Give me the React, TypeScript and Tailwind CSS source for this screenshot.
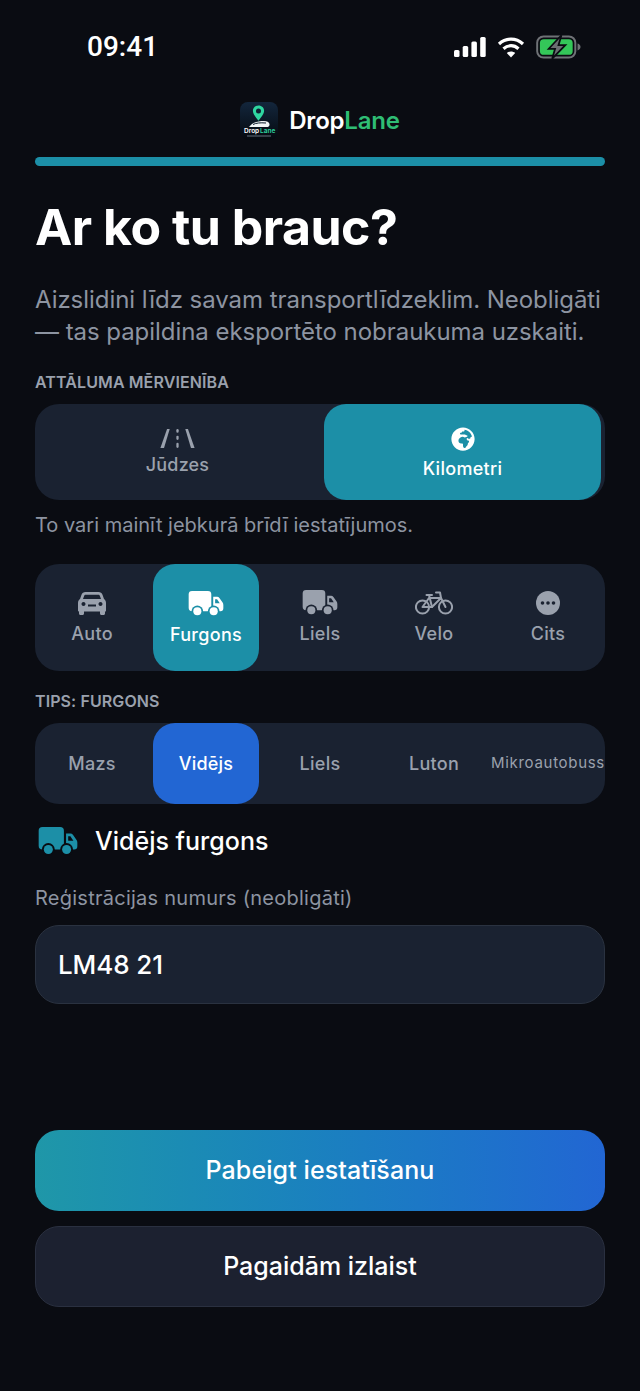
import { FaGlobeAfrica } from "react-icons/fa";

const font = { fontFamily: "Inter, 'Noto Sans', sans-serif" };

function Truck({ className, ring }: { className: string; ring: string }) {
  return (
    <svg viewBox="0 0 36 27" className={className} fill="currentColor">
      <path d="M3.500 0H20a3.500 3.500 0 0 1 3.500 3.500V21H3.500A3.500 3.500 0 0 1 0 17.500v-14A3.500 3.500 0 0 1 3.500 0Z" />
      <path d="M25 6h4.500c1 0 1.800.4 2.400 1.200l3.200 4.600c.6.8.9 1.700.9 2.700V18a3 3 0 0 1-3 3h-7.500V6Z" />
      <path d="M27.500 8.500h2l2.800 4.300h-4.800Z" fill={ring} />
      <circle cx="9" cy="21" r="6" fill={ring} />
      <circle cx="9" cy="21" r="4.200" />
      <circle cx="26" cy="21" r="6" fill={ring} />
      <circle cx="26" cy="21" r="4.200" />
    </svg>
  );
}

function Car({ className }: { className: string }) {
  return (
    <svg viewBox="0 0 28 23" className={className} fill="currentColor">
      <path
        fillRule="evenodd"
        d="M7.500 0h13c2 0 3.300 1 4 2.800l1.500 4.200c1.300 1 2 2.300 2 4v7.500c0 .8-.5 1.200-1.200 1.200H27V21.500c0 .8-.6 1.500-1.500 1.500h-2c-.9 0-1.500-.7-1.500-1.500V19.500H6v2c0 .8-.6 1.500-1.500 1.500h-2C1.600 23 1 22.300 1 21.500V19.700H1.200C.5 19.700 0 19.300 0 18.500V11c0-1.700.7-3 2-4l1.500-4.200C4.200 1 5.500 0 7.500 0Zm.3 2.700c-.9 0-1.400.4-1.700 1.200L5 7h18l-1.100-3.100c-.3-.8-.8-1.200-1.700-1.200H7.800ZM3.500 12c0 1.200.9 2 2 2s2-.8 2-2-.9-2-2-2-2 .8-2 2Zm17 0c0 1.200.9 2 2 2s2-.8 2-2-.9-2-2-2-2 .8-2 2ZM10 12.500v2h8v-2h-8Z"
      />
    </svg>
  );
}

function Bike({ className }: { className: string }) {
  return (
    <svg viewBox="0 0 38 24" className={className} fill="none" stroke="currentColor" strokeWidth="2" strokeLinecap="round" strokeLinejoin="round">
      <circle cx="7.500" cy="16" r="6.600" />
      <circle cx="30.500" cy="16" r="6.600" />
      <path d="M7.500 16 14 7h12M7.500 16H17L26 7l4.500 9" />
      <path d="M11.500 4h5.500M14 4l3 12" />
      <path d="M21 1.500h4L26 7" />
    </svg>
  );
}

function Road({ className }: { className: string }) {
  return (
    <svg viewBox="0 0 36 20" className={className} fill="currentColor">
      <path d="M7 0h2.800L3.800 20H0Z" />
      <path d="M29 0h-2.800L32.200 20H36Z" />
      <rect x="16.800" y="0" width="2.400" height="4" rx="1.200" />
      <rect x="16.800" y="7" width="2.400" height="4.500" rx="1.200" />
      <rect x="16.800" y="14.500" width="2.400" height="5.500" rx="1.200" />
    </svg>
  );
}

function More({ className }: { className: string }) {
  return (
    <svg viewBox="0 0 24 24" className={className}>
      <circle cx="12" cy="12" r="12" fill="currentColor" />
      <circle cx="6.500" cy="12" r="1.800" fill="#1a2231" />
      <circle cx="12" cy="12" r="1.800" fill="#1a2231" />
      <circle cx="17.500" cy="12" r="1.800" fill="#1a2231" />
    </svg>
  );
}

function Logo() {
  return (
    <svg viewBox="0 0 38 38" className="h-[38px] w-[38px]">
      <defs>
        <linearGradient id="logoBg" x1="0" y1="0" x2="0" y2="1">
          <stop offset="0" stopColor="#13263c" />
          <stop offset="1" stopColor="#05090f" />
        </linearGradient>
      </defs>
      <rect width="38" height="38" rx="8" fill="url(#logoBg)" />
      <path
        fillRule="evenodd"
        d="M18.500 3.500c3.300 0 5.600 2.400 5.600 5.300 0 3.400-3.200 6.800-5.600 10-2.400-3.200-5.600-6.600-5.600-10 0-2.900 2.300-5.300 5.600-5.300Zm0 2.900a2.500 2.500 0 1 0 0 5 2.500 2.500 0 0 0 0-5Z"
        fill="#2fd6a0"
      />
      <path d="M9 25c4-5 9-6 15-6 3 0 5 1 5.500 3 .2 2-1 3-3 3H9Z" fill="#f2f5f7" />
      <path d="M13 22.500c3-1.500 7-2 13-1.500" stroke="#0b1a2a" strokeWidth="1" fill="none" />
      <text x="4" y="31" fontSize="6.500" fontWeight="600" fill="#ffffff" fontFamily="Inter, sans-serif">
        Drop
      </text>
      <text x="20" y="31" fontSize="6.500" fontWeight="600" fill="#2fd6a0" fontFamily="Inter, sans-serif">
        Lane
      </text>
      <rect x="7" y="33.500" width="24" height="1" fill="#65707d" />
    </svg>
  );
}

function StatusBar() {
  return (
    <div className="flex h-[94px] items-center justify-between pl-[87px] pr-[59px]">
      <span className="text-[28px] font-medium leading-none text-white" style={{ fontFamily: "Roboto, sans-serif" }}>
        09:41
      </span>
      <div className="flex items-center gap-[11px]">
        <svg viewBox="0 0 32 20" className="h-[20px] w-[32px]" fill="#ffffff">
          <rect x="0" y="13" width="5.500" height="7" rx="1.500" />
          <rect x="8.700" y="9" width="5.500" height="11" rx="1.500" />
          <rect x="17.400" y="4.500" width="5.500" height="15.500" rx="1.500" />
          <rect x="26.200" y="0" width="5.500" height="20" rx="1.500" />
        </svg>
        <svg viewBox="0 0 28 22" className="h-[22px] w-[28px]" fill="none" stroke="#ffffff" strokeWidth="3.200">
          <path d="M2 8c7-6.500 17-6.500 24 0" />
          <path d="M6.500 12.700c4.500-4 10.500-4 15 0" />
          <path d="M14 21.500 9.800 17c2.500-2 5.900-2 8.400 0Z" fill="#ffffff" stroke="none" />
        </svg>
        <svg viewBox="0 0 46 24" className="h-[24px] w-[45px]">
          <rect x="1.200" y="1.200" width="39" height="21.600" rx="6.500" fill="none" stroke="#6f7276" strokeWidth="2" />
          <rect x="4" y="4" width="33.500" height="16" rx="4" fill="#34c759" />
          <path d="M42.500 8.500c2 .6 3 2 3 3.500s-1 2.900-3 3.500Z" fill="#6f7276" />
          <path d="M26 0 13 13.800h6.500L16.500 24 30 10.200h-7Z" fill="#6b6e72" stroke="#0a0c12" strokeWidth="1.800" />
        </svg>
      </div>
    </div>
  );
}

const vehicles = [
  { label: "Auto", icon: <Car className="h-[23px] w-[28px]" /> },
  { label: "Furgons", active: true, icon: <Truck className="h-[26px] w-[36px]" ring="#1c8fa7" /> },
  { label: "Liels", icon: <Truck className="h-[26px] w-[36px]" ring="#1a2231" /> },
  { label: "Velo", icon: <Bike className="h-[24px] w-[38px]" /> },
  { label: "Cits", icon: <More className="h-[24px] w-[24px]" /> },
];

const types = ["Mazs", "Vidējs", "Liels", "Luton", "Mikroautobuss"];

export default function App() {
  return (
    <div className="flex h-[1391px] w-[640px] flex-col overflow-hidden bg-[#0a0c12]" style={font}>
      <StatusBar />

      <div className="mt-[8px] flex h-[38px] items-center justify-center gap-[11px]">
        <Logo />
        <span className="text-[24px] font-semibold leading-none tracking-[-0.2px] text-white">
          Drop<span className="text-[#2fbd74]">Lane</span>
        </span>
      </div>

      <div className="flex flex-1 flex-col px-[35px]">
        <div className="mt-[17px] h-[9px] rounded-full bg-[#1c8fa7]" />

        <h1 className="mt-[32px] text-[50px] font-bold leading-[58px] tracking-[-0.5px] text-white">Ar ko tu brauc?</h1>

        <p className="mt-[28px] whitespace-nowrap text-[24px] leading-[32px] tracking-[-0.05px] text-[#8d94a1]">
          Aizslidini līdz savam transportlīdzeklim. Neobligāti
          <br />— tas papildina eksportēto nobraukuma uzskaiti.
        </p>

        <div className="mt-[24px] text-[16px] font-semibold leading-[20px] tracking-[0.1px] text-[#9aa1ad]">ATTĀLUMA MĒRVIENĪBA</div>

        <div className="mt-[12px] grid h-[96px] grid-cols-2 rounded-[24px] bg-[#1a2231]">
          <div className="flex flex-col items-center justify-center gap-[6px] text-[#9aa1ad]">
            <Road className="h-[19px] w-[35px]" />
            <span className="text-[18px] font-medium leading-[22px] tracking-[0.2px]">Jūdzes</span>
          </div>
          <div className="mx-1 flex flex-col items-center justify-center gap-[7px] rounded-[22px] bg-[#1c8fa7] pt-[3px] text-white">
            <FaGlobeAfrica className="h-[24px] w-[24px]" />
            <span className="text-[18px] font-medium leading-[22px] tracking-[0.3px]">Kilometri</span>
          </div>
        </div>

        <p className="mt-[11px] text-[20px] leading-[28px] text-[#8d94a1]">To vari mainīt jebkurā brīdī iestatījumos.</p>

        <div className="mt-[25px] grid h-[107px] grid-cols-5 rounded-[24px] bg-[#1a2231]">
          {vehicles.map((v) => (
            <div
              key={v.label}
              className={
                v.active
                  ? "mx-1 flex flex-col items-center justify-center gap-[5px] rounded-[22px] bg-[#1c8fa7] pt-[1px] text-white"
                  : "mx-1 flex flex-col items-center justify-center gap-[5px] text-[#9aa1ad]"
              }
            >
              <div className="flex h-[28px] items-center">{v.icon}</div>
              <span className="text-[18px] font-medium leading-[24px] tracking-[0.3px]">{v.label}</span>
            </div>
          ))}
        </div>

        <div className="mt-[20px] text-[16px] font-semibold leading-[20px] tracking-[0.1px] text-[#9aa1ad]">TIPS: FURGONS</div>

        <div className="mt-[12px] grid h-[81px] grid-cols-5 rounded-[24px] bg-[#1a2231]">
          {types.map((t) => (
            <div
              key={t}
              className={
                t === "Vidējs"
                  ? "mx-1 flex items-center justify-center rounded-[22px] bg-[#2266d3] text-[18px] font-medium tracking-[0.2px] text-white"
                  : t === "Mikroautobuss"
                    ? "flex items-center justify-center whitespace-nowrap text-[15px] font-normal tracking-[0.7px] text-[#9aa1ad]"
                    : "mx-1 flex items-center justify-center text-[18px] font-medium tracking-[0.3px] text-[#9aa1ad]"
              }
            >
              {t}
            </div>
          ))}
        </div>

        <div className="mt-[21px] flex h-[32px] items-center gap-[17px] pl-[3px]">
          <Truck className="h-[29px] w-[40px] text-[#1c8fa7]" ring="#0a0c12" />
          <span className="text-[25px] font-medium leading-none text-white">Vidējs furgons</span>
        </div>

        <div className="mt-[27px] text-[20px] leading-[28px] tracking-[0.25px] text-[#8d94a1]">Reģistrācijas numurs (neobligāti)</div>

        <div className="mt-[13px] flex h-[79px] items-center rounded-[24px] border border-[#2a3240] bg-[#1a2231] px-[22px] text-[26px] font-medium tracking-[-0.1px] text-white">
          LM48 21
        </div>

        <div className="mt-[126px] flex h-[81px] items-center justify-center rounded-[24px] bg-gradient-to-r from-[#1f97a8] to-[#2266d3] text-[25px] font-medium tracking-[0.1px] text-white">
          Pabeigt iestatīšanu
        </div>

        <div className="mt-[15px] flex h-[81px] items-center justify-center rounded-[24px] border border-[#2a3040] bg-[#1c2130] text-[25px] font-medium text-white">
          Pagaidām izlaist
        </div>
      </div>
    </div>
  );
}
